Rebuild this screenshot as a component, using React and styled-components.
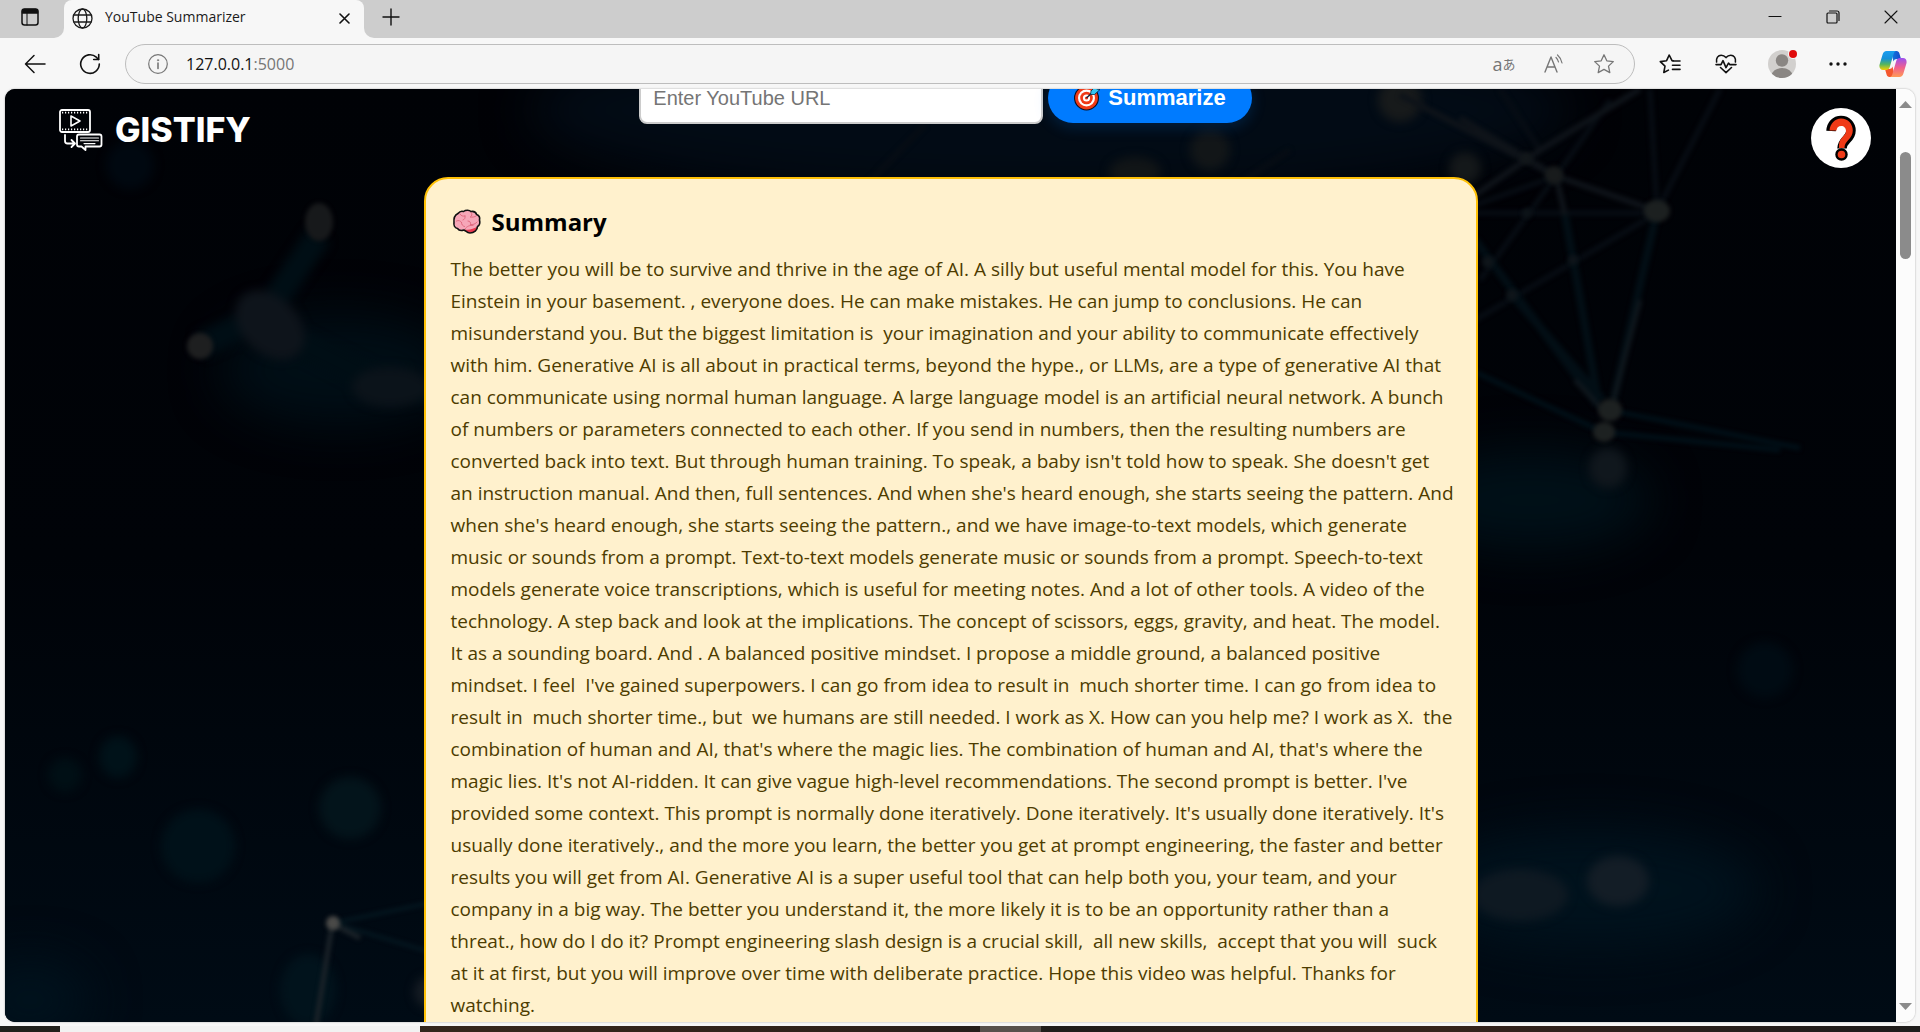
import React from "react";
import styled, { createGlobalStyle } from "styled-components";

const uiFont = `"Open Sans", "Noto Sans", "Noto Sans CJK JP", sans-serif`;

const GlobalStyle = createGlobalStyle`
  *, *::before, *::after { box-sizing: border-box; }
  body { margin: 0; background: #f7f7f7; font-family: ${uiFont}; }
  button, input { font: inherit; margin: 0; }
  svg { display: block; flex: none; }
`;

/* ---------- browser window ---------- */

const Window = styled.div`
  display: flex;
  flex-direction: column;
  height: 100vh;
  overflow: hidden;
  background: #f7f7f7;
`;

const TabStrip = styled.header`
  display: flex;
  height: 38px;
  flex: none;
`;

const StripStart = styled.div`
  display: flex;
  justify-content: center;
  width: 64px;
  padding-right: 4px;
  background: #cdcdcd;
  border-bottom-right-radius: 10px;
`;

const StripEnd = styled.div`
  display: flex;
  justify-content: space-between;
  flex: 1;
  background: #cdcdcd;
  border-bottom-left-radius: 10px;
`;

const TabSlot = styled.div`
  width: 300px;
  background: linear-gradient(#cdcdcd 8px, #f7f7f7 8px);
`;

const Tab = styled.div`
  display: flex;
  align-items: center;
  height: 36px;
  padding: 0 6px 0 8px;
  gap: 12px;
  background: #f7f7f7;
  border-radius: 8px 8px 0 0;
  font-size: 14px;
  line-height: 20px;
  color: #1b1b1b;
`;

const TabTitle = styled.span`
  flex: 1;
  margin-bottom: 2px;
`;

const IconButton = styled.button`
  display: flex;
  align-items: center;
  justify-content: center;
  flex: none;
  width: ${(p) => p.$w}px;
  height: ${(p) => p.$h || 36}px;
  padding: 0;
  border: 0;
  background: none;
  color: ${(p) => p.$color || "#111"};
`;

const WindowControls = styled.div`
  display: flex;
`;

const Toolbar = styled.nav`
  display: flex;
  align-items: center;
  height: 51px;
  flex: none;
  padding-left: 7px;
`;

const AddressBar = styled.div`
  display: flex;
  align-items: center;
  flex: 1;
  height: 40px;
  margin: 0 7px 0 8px;
  padding: 0 5px 0 22px;
  border: 1px solid #bdbdbd;
  border-radius: 20px;
  background: #f5f5f5;
  font-size: 16px;
  line-height: 24px;
`;

const Address = styled.div`
  flex: 1;
  padding-left: 18px;
  color: #111;
`;

const Port = styled.span`
  color: #767676;
`;

const LatinA = styled.span`
  font-size: 18px;
  line-height: 24px;
`;

const KanaA = styled.span`
  font-family: "Noto Sans CJK JP", sans-serif;
  font-size: 13px;
  line-height: 24px;
`;

const Frame = styled.div`
  display: flex;
  flex: 1;
  min-height: 0;
  margin: 0 5px 4px;
  border-radius: 10px;
  overflow: hidden;
  background: #fcfcfc;
  box-shadow: 0 0 2px rgba(0, 0, 0, 0.35);
`;

const ScrollTrack = styled.div`
  display: flex;
  flex-direction: column;
  align-items: center;
  width: 19px;
  padding: 12px 0;
  background: #fcfcfc;
  color: #8b8b8b;
`;

const ScrollThumb = styled.div`
  width: 11px;
  height: 107px;
  margin: 44px 0 auto;
  border-radius: 6px;
  background: #8b8b8b;
`;

const Taskbar = styled.footer`
  display: flex;
  flex: none;
  height: 6px;
  background: linear-gradient(90deg, #1f201c, #35261d 25%, #2e211a 45%, #1f1c1a 55%, #35231b 75%, #1e1c1b);
`;

const TaskbarItem = styled.div`
  width: ${(p) => p.$w}px;
  margin-left: ${(p) => p.$gap}px;
  background: ${(p) => p.$bg};
`;

/* ---------- page ---------- */

const Page = styled.main`
  position: relative;
  flex: 1;
  min-width: 0;
  overflow: hidden;
  background: #000307;
`;

const Backdrop = styled.svg`
  position: absolute;
  inset: 0;
  width: 100%;
  height: 100%;
`;

const FloatingBar = styled.div`
  position: absolute;
  inset: 0 0 auto;
  display: flex;
  justify-content: space-between;
  align-items: flex-start;
  padding: 19px 25px 0 54px;
`;

const Brand = styled.a`
  display: flex;
  align-items: center;
  gap: 12px;
  color: #fff;
  text-decoration: none;
  font-family: Inter, "Open Sans", sans-serif;
  font-size: 34px;
  font-weight: 800;
  line-height: 44px;
`;

const HelpButton = styled.button`
  display: flex;
  align-items: center;
  justify-content: center;
  width: 60px;
  height: 60px;
  padding: 0;
  border: 0;
  border-radius: 50%;
  background: #fff;
`;

const Content = styled.div`
  position: relative;
  display: flex;
  flex-direction: column;
  align-items: center;
  margin-top: -17px;
`;

const UrlForm = styled.form`
  display: flex;
  align-items: center;
  gap: 5px;
  padding-right: 10px;
  font-family: "Liberation Sans", Arial, sans-serif;
`;

const UrlInput = styled.input`
  width: 404px;
  height: 52px;
  padding: 0 12px;
  border: 2px solid #ccc;
  border-radius: 8px;
  background: #fff;
  font-size: 20px;
  &::placeholder { color: #757575; opacity: 1; }
`;

const SubmitButton = styled.button`
  display: flex;
  align-items: center;
  gap: 8px;
  height: 50px;
  padding: 0 26px;
  border: 0;
  border-radius: 25px;
  background: #007bff;
  box-shadow: 0 4px 15px rgba(0, 123, 255, 0.2);
  color: #fff;
  font-size: 22px;
  font-weight: 700;
`;

const Card = styled.section`
  width: 1054px;
  max-width: 100%;
  margin-top: 53px;
  padding: 25px;
  border: 2px solid #ffc107;
  border-radius: 24px;
  background: #fff1cd;
`;

const CardTitle = styled.h2`
  display: flex;
  align-items: center;
  gap: 9px;
  margin: 0 0 13px;
  color: #000;
  font-size: 24px;
  font-weight: 700;
  line-height: 36px;
`;

const CardText = styled.p`
  margin: 0;
  color: #4d3c00;
  font-size: 19px;
  line-height: 32px;
  white-space: pre;
`;

const summary = [
  "The better you will be to survive and thrive in the age of AI. A silly but useful mental model for this. You have",
  "Einstein in your basement. , everyone does. He can make mistakes. He can jump to conclusions. He can",
  "misunderstand you. But the biggest limitation is  your imagination and your ability to communicate effectively",
  "with him. Generative AI is all about in practical terms, beyond the hype., or LLMs, are a type of generative AI that",
  "can communicate using normal human language. A large language model is an artificial neural network. A bunch",
  "of numbers or parameters connected to each other. If you send in numbers, then the resulting numbers are",
  "converted back into text. But through human training. To speak, a baby isn't told how to speak. She doesn't get",
  "an instruction manual. And then, full sentences. And when she's heard enough, she starts seeing the pattern. And",
  "when she's heard enough, she starts seeing the pattern., and we have image-to-text models, which generate",
  "music or sounds from a prompt. Text-to-text models generate music or sounds from a prompt. Speech-to-text",
  "models generate voice transcriptions, which is useful for meeting notes. And a lot of other tools. A video of the",
  "technology. A step back and look at the implications. The concept of scissors, eggs, gravity, and heat. The model.",
  "It as a sounding board. And . A balanced positive mindset. I propose a middle ground, a balanced positive",
  "mindset. I feel  I've gained superpowers. I can go from idea to result in  much shorter time. I can go from idea to",
  "result in  much shorter time., but  we humans are still needed. I work as X. How can you help me? I work as X.  the",
  "combination of human and AI, that's where the magic lies. The combination of human and AI, that's where the",
  "magic lies. It's not AI-ridden. It can give vague high-level recommendations. The second prompt is better. I've",
  "provided some context. This prompt is normally done iteratively. Done iteratively. It's usually done iteratively. It's",
  "usually done iteratively., and the more you learn, the better you get at prompt engineering, the faster and better",
  "results you will get from AI. Generative AI is a super useful tool that can help both you, your team, and your",
  "company in a big way. The better you understand it, the more likely it is to be an opportunity rather than a",
  "threat., how do I do it? Prompt engineering slash design is a crucial skill,  all new skills,  accept that you will  suck",
  "at it at first, but you will improve over time with deliberate practice. Hope this video was helpful. Thanks for",
  "watching.",
].join("\n");

/* ---------- drawings ---------- */

const Stroke = ({ w, h = w, sw = 1.4, box, children }) => (
  <svg width={w} height={h} viewBox={box || `0 0 ${w} ${h}`} fill="none" stroke="currentColor" strokeWidth={sw} strokeLinecap="round" strokeLinejoin="round" aria-hidden="true">
    {children}
  </svg>
);

const TabActionsIcon = () => (
  <Stroke w={18} sw={1.5}>
    <rect x="1" y="1" width="16" height="16" rx="2.5" />
    <path d="M1.5 3.5a2 2 0 0 1 2-2h11a2 2 0 0 1 2 2V5h-15z" fill="currentColor" />
    <path d="M6 5.5V17" strokeWidth="1" />
  </Stroke>
);

const GlobeIcon = () => (
  <Stroke w={21} sw={1.3}>
    <circle cx="10.5" cy="10.5" r="9.5" />
    <ellipse cx="10.5" cy="10.5" rx="4.3" ry="9.5" />
    <path d="M2 7h17M2 14h17" />
  </Stroke>
);

const InfoIcon = () => (
  <Stroke w={20} sw={1.2}>
    <circle cx="10" cy="10" r="9.3" />
    <path d="M10 9v5.5" strokeWidth="1.6" />
    <circle cx="10" cy="6.2" r="0.7" fill="currentColor" strokeWidth="0.6" />
  </Stroke>
);

const ReloadIcon = () => (
  <Stroke w={22} sw={1.6}>
    <path d="M20.3 11a9.3 9.3 0 1 1-3-6.8l2.2 2.2" />
    <path d="M19.7 1.5v5h-5" />
  </Stroke>
);

const starPath = "M11 1.8l2.8 6 6.5.8-4.8 4.5 1.3 6.5L11 16.4l-5.8 3.2 1.3-6.5L1.7 8.6l6.5-.8z";

const FavouritesIcon = () => (
  <Stroke w={22} sw={1.6}>
    <path d="M14.2 7.8 13 7.7 10.2 2 7.6 7.7l-6.3.9L6 13.1l-1.2 6.4 4.6-2.4" />
    <path d="M14 8h7M13.5 12.2H21M13.5 16.4H21" />
  </Stroke>
);

const HealthIcon = () => (
  <Stroke w={22} sw={1.6}>
    <path d="M1.6 9C.8 5 3.2 2.2 6.2 2.2c2 0 3.5.9 4.8 2.4 1.300-1.500 2.800-2.400 4.800-2.400 3 0 5.400 2.800 4.600 6.800" />
    <path d="M1 11.600h5l2-4 3 7 2.500-4.500 1.200 1.500H21" />
    <path d="M5.500 14.500 11 19.600l5.500-5.100" />
  </Stroke>
);

const AvatarIcon = () => (
  <svg width="32" height="30" viewBox="0 0 32 30" aria-hidden="true">
    <defs><clipPath id="avatar"><circle cx="16" cy="15" r="14" /></clipPath></defs>
    <circle cx="16" cy="15" r="14" fill="#d2d0ce" />
    <g clipPath="url(#avatar)" fill="#8a8683">
      <circle cx="16" cy="11.500" r="6.200" />
      <ellipse cx="16" cy="27" rx="10.500" ry="8" />
    </g>
    <circle cx="27" cy="5" r="5" fill="#f7f7f7" />
    <circle cx="27" cy="5" r="4" fill="#e00b0b" />
  </svg>
);

const CopilotIcon = () => (
  <svg width="28" height="28" viewBox="0 0 28 28" aria-hidden="true">
    <defs>
      <linearGradient id="cpA" x1="0" y1="0" x2="0" y2="1">
        <stop offset="0" stopColor="#1a9df0" /><stop offset=".4" stopColor="#1590d8" /><stop offset=".7" stopColor="#55b560" /><stop offset="1" stopColor="#f7d000" />
      </linearGradient>
      <linearGradient id="cpB" x1="0" y1="0" x2="0" y2="1">
        <stop offset="0" stopColor="#9b50f0" /><stop offset=".5" stopColor="#f0608e" /><stop offset="1" stopColor="#ff9a55" />
      </linearGradient>
      <linearGradient id="cpC" x1="0" y1="0" x2="1" y2="0"><stop offset="0" stopColor="#127be0" /><stop offset="1" stopColor="#1747c8" /></linearGradient>
    </defs>
    <path d="M12 1h5.500c1.600 0 2.500 1 3 2.700L22 9h-4c-2 0-3 .8-3.500 2.500z" fill="url(#cpC)" />
    <path d="M16 27h-5.500c-1.600 0-2.500-1-3-2.700L6 19h4c2 0 3-.8 3.500-2.500z" fill="#f4572e" />
    <path d="M7.500 1H17c-1.500.5-2 1.500-2.500 3.200l-3.800 13C10.200 18.800 9 20 7 20H4C1.300 20-.2 17.500.6 14.500l3-10C4.200 2.300 5.500 1 7.500 1z" fill="url(#cpA)" />
    <path d="M20.500 27H11c1.500-.5 2-1.500 2.500-3.200l3.800-13C17.800 9.200 19 8 21 8h3c2.700 0 4.200 2.500 3.400 5.500l-3 10c-.6 2.200-1.900 3.500-3.900 3.500z" fill="url(#cpB)" />
  </svg>
);

const BrandIcon = () => (
  <Stroke w={44} sw={1.8}>
    <rect x="1" y="2" width="30" height="22" rx="2" />
    <path d="M3 4.600h26M3 21.400h26" strokeWidth="1.600" strokeDasharray="1.200 1.800" strokeLinecap="butt" />
    <path d="M12 8v10l9-5z" strokeWidth="1.600" />
    <path d="M6 27v6q0 2.500 2.500 2.500H15M12.500 32l3.500 3.500-3.500 3.500" />
    <path d="M20 26.500h20.500q2 0 2 2v8q0 2-2 2H26.500v3.500l-4-3.500H20q-2 0-2-2v-8q0-2 2-2z" />
    <path d="M21.500 30h18M21.500 32.800h18M25 35.600h11" strokeWidth="1.100" />
  </Stroke>
);

const QuestionMark = () => (
  <svg width="30" height="46" viewBox="0 0 30 46" fill="none" strokeLinejoin="round" aria-hidden="true">
    <g stroke="#000">
      <path d="M5 16C5.500 9.500 9.500 5.500 15 5.500c6 0 10 4.500 10 10 0 4-2 6.500-4.500 9s-4.500 5-4.500 9" strokeWidth="9.500" />
      <circle cx="15.500" cy="39.500" r="4" strokeWidth="4.500" />
    </g>
    <path d="M3.500 15.500C4 8.500 9 3.500 15 3.500c7 0 11.800 5.500 11.800 12 0 4-2 7-4.500 9.500-2.500 2.700-3.800 4.500-3.800 8h-5.500v-2.500c0-4 1.500-6.500 4-9 2-2 3-3.500 3-5.500 0-3-2-5-4.800-5s-4.700 2-4.700 4.500z" fill="#f03a17" />
    <circle cx="15.500" cy="39.500" r="3.800" fill="#f03a17" />
  </svg>
);

const TargetIcon = () => (
  <svg width="26" height="26" viewBox="0 0 26 26" aria-hidden="true">
    <circle cx="12.500" cy="13" r="12.500" fill="#0b1020" />
    <circle cx="12.500" cy="13" r="11.400" fill="#f03a17" />
    <circle cx="12.500" cy="13" r="8.500" fill="#fff" />
    <circle cx="12.500" cy="13" r="6.300" fill="#f03a17" />
    <circle cx="12.500" cy="13" r="3.600" fill="#fff" />
    <circle cx="12.500" cy="13" r="1.600" fill="#f03a17" />
    <path d="M12.500 13 20 6" stroke="#10243c" strokeWidth="1.400" />
    <path d="M16.500 9.500 17 6l5-5 .6 3L26 4.500l-5.500 5z" fill="#33c5f3" stroke="#10243c" strokeWidth=".8" />
  </svg>
);

const BrainIcon = () => (
  <svg width="32" height="26" viewBox="0 0 32 26" strokeLinecap="round" strokeLinejoin="round" aria-hidden="true">
    <path d="M7 4.500C8.500 2.500 11 2 12.500 2.500 15 .5 18.500 1 20 2.500c3-.5 5 1 5.600 3 2.500 1 3.400 3.500 2.900 5.500.8 3-.2 5.500-2 6.500C26.500 21 23 24 19 24c-3 0-4-2-6-3-3 1-5.500 0-6.500-1.500C3.500 19 2.500 16 3 13.500 2.500 9 4 6 7 4.500z" fill="#f6a6b8" />
    <path d="M27 17.500C26 21.500 22.500 23.500 19 23.500c-2.500 0-4-1.500-5-3 4 .8 8.500-.5 13-3z" fill="#e8384f" />
    <path d="M9 5c1 2 3 2.500 5 2M14 7c.5 2-.5 3.500-2 4M20 3.500c1.500 1.500 1 3.500-.5 4.500M19.500 8c2 .5 4 0 5.500-1M5.500 12c2-1 4-.5 5 1.500M10.500 13.500c0 2 1 3.500 3 4M17 12c2 0 3 1.500 2.500 3.500M19.500 15.500c2.500.5 5-.5 6.500-2.500M14 20c2-3 5-4 8-3.500" fill="none" stroke="#e06a80" strokeWidth="1" />
    <path d="M7 4.500C8.500 2.500 11 2 12.500 2.500 15 .5 18.500 1 20 2.500c3-.5 5 1 5.600 3 2.500 1 3.400 3.500 2.900 5.500.8 3-.2 5.500-2 6.500C26.500 21 23 24 19 24c-3 0-4-2-6-3-3 1-5.500 0-6.500-1.500C3.500 19 2.500 16 3 13.500 2.500 9 4 6 7 4.500z" fill="none" stroke="#111" strokeWidth="1.600" />
  </svg>
);

const Blur = ({ id, by }) => (
  <filter id={id} x="-100%" y="-100%" width="300%" height="300%" colorInterpolationFilters="sRGB">
    <feGaussianBlur stdDeviation={by} />
  </filter>
);

const Network = () => (
  <Backdrop viewBox="5 89 1891 933" preserveAspectRatio="xMidYMid slice" aria-hidden="true">
    <defs>
      <linearGradient id="deep" x1="0" y1="0" x2="0" y2="1">
        <stop offset="0" stopColor="#000206" /><stop offset=".5" stopColor="#000308" /><stop offset="1" stopColor="#000b15" />
      </linearGradient>
      <Blur id="soft" by={2} />
      <Blur id="mid" by={5} />
      <Blur id="wide" by={24} />
    </defs>
    <rect x="5" y="89" width="1891" height="933" fill="url(#deep)" />
    <g filter="url(#wide)">
      <ellipse cx="1050" cy="110" rx="520" ry="90" fill="#020b15" />
      <ellipse cx="340" cy="370" rx="120" ry="55" fill="#000e16" />
      <ellipse cx="1530" cy="500" rx="120" ry="50" fill="#001018" />
      <ellipse cx="1590" cy="890" rx="170" ry="60" fill="#00121d" />
      <ellipse cx="30" cy="1000" rx="60" ry="40" fill="#00121d" />
    </g>
    <g filter="url(#mid)">
      <path d="M319 235 265 315 200 346M265 325 390 388 430 392" stroke="#000e15" strokeWidth="26" fill="none" />
      <ellipse cx="270" cy="325" rx="40" ry="28" transform="rotate(45 270 325)" fill="#0e141b" />
      <ellipse cx="390" cy="387" rx="38" ry="20" fill="#0b131a" />
      <ellipse cx="118" cy="757" rx="19" ry="21" fill="#001219" />
      <circle cx="65" cy="775" r="17" fill="#000f15" />
      <circle cx="198" cy="846" r="37" fill="#001119" />
      <circle cx="350" cy="808" r="31" fill="#03141b" />
      <ellipse cx="308" cy="990" rx="28" ry="36" fill="#01131c" />
      <circle cx="430" cy="992" r="16" fill="#151c23" />
      <circle cx="130" cy="165" r="24" fill="#000810" />
      <circle cx="1210" cy="150" r="20" fill="#121618" />
      <ellipse cx="1135" cy="172" rx="26" ry="15" fill="#111517" />
      <circle cx="1400" cy="100" r="22" fill="#171a1b" />
      <circle cx="1465" cy="168" r="16" fill="#14181a" />
      <ellipse cx="1608" cy="468" rx="19" ry="20" fill="#10171d" />
      <circle cx="1765" cy="670" r="28" fill="#000b13" />
      <ellipse cx="1618" cy="881" rx="31" ry="25" fill="#131d26" />
      <ellipse cx="1520" cy="895" rx="48" ry="26" fill="#0e1922" />
    </g>
    <g filter="url(#soft)" fill="none" strokeWidth="5">
      <path d="M1556 176 1475 205M1475 213H1657M1657 213 1475 320M1556 176 1480 280M1540 150 1500 89M1657 211 1650 89M1657 211 1720 89M1556 176 1610 100M925 125 868 183M1290 150 1240 183" stroke="#070d14" />
      <path d="M1556 176 1657 211M1540 150 1640 89M1556 176 1460 118M1475 195 1540 150M1556 176 1565 215M1556 176 1400 95" stroke="#0e1319" strokeWidth="6" />
      <path d="M1565 215 1575 270 1598 400M1657 211 1613 402M1475 240 1598 405M1512 295 1603 400" stroke="#020e15" strokeWidth="8" />
      <path d="M1475 372 1603 432M1609 410 1800 448M1603 432 1780 450" stroke="#001018" strokeWidth="5" />
      <path d="M1640 300 1613 402M1575 380 1603 410" stroke="#0e161c" strokeWidth="5" />
      <path d="M333 923 430 903M333 923 430 952" stroke="#04161f" strokeWidth="4" />
      <path d="M332 925 316 1025M335 925 360 938" stroke="#1a2228" strokeWidth="5" />
    </g>
    <g filter="url(#soft)">
      <ellipse cx="319" cy="222" rx="14" ry="19" fill="#17191b" />
      <circle cx="200" cy="346" r="13" fill="#1e1f20" />
      <circle cx="333" cy="923" r="7" fill="#4a4a48" />
      <circle cx="1554" cy="175" r="9" fill="#181b1c" />
      <circle cx="1526" cy="158" r="6" fill="#12171a" />
      <ellipse cx="1657" cy="211" rx="13" ry="11" fill="#1c2020" />
      <ellipse cx="1610" cy="410" rx="12" ry="11" fill="#1d2121" />
      <ellipse cx="1604" cy="432" rx="11" ry="10" fill="#1d2121" />
      <circle cx="1488" cy="262" r="6" fill="#0f151a" />
      <circle cx="1512" cy="295" r="6" fill="#0f151a" />
      <circle cx="1573" cy="260" r="5" fill="#0f151a" />
      <circle cx="1527" cy="213" r="5" fill="#0d1318" />
    </g>
  </Backdrop>
);

/* ---------- app ---------- */

export default function App() {
  return (
    <Window>
      <GlobalStyle />
      <TabStrip>
        <StripStart>
          <IconButton $w={40} $h={34} aria-label="Tab actions"><TabActionsIcon /></IconButton>
        </StripStart>
        <TabSlot>
          <Tab>
            <GlobeIcon />
            <TabTitle>YouTube Summarizer</TabTitle>
            <IconButton $w={28} $h={28} aria-label="Close tab">
              <Stroke w={11} sw={1.6}><path d="M1 1l9 9M10 1l-9 9" /></Stroke>
            </IconButton>
          </Tab>
        </TabSlot>
        <StripEnd>
          <IconButton $w={54} $h={33} aria-label="New tab">
            <Stroke w={18} sw={1.4}><path d="M9 1v16M1 9h16" /></Stroke>
          </IconButton>
          <WindowControls>
            <IconButton $w={58} $h={34} aria-label="Minimize">
              <Stroke w={14} sw={1.2}><path d="M1 6.500h12" /></Stroke>
            </IconButton>
            <IconButton $w={58} $h={34} aria-label="Restore">
              <Stroke w={14} sw={1.2}><rect x="1" y="3" width="10" height="10" rx="1" /><path d="M3.500 1H11q2 0 2 2v7.500" /></Stroke>
            </IconButton>
            <IconButton $w={58} $h={34} aria-label="Close">
              <Stroke w={14} sw={1.1}><path d="M1 1l12 12M13 1 1 13" /></Stroke>
            </IconButton>
          </WindowControls>
        </StripEnd>
      </TabStrip>

      <Toolbar>
        <IconButton $w={55} aria-label="Back">
          <Stroke w={22} sw={1.500}><path d="M21 11H1.500M10 2.500 1.500 11l8.500 8.500" /></Stroke>
        </IconButton>
        <IconButton $w={55} aria-label="Refresh"><ReloadIcon /></IconButton>
        <AddressBar>
          <IconButton $w={20} $color="#767676" aria-label="Site information"><InfoIcon /></IconButton>
          <Address>127.0.0.1<Port>:5000</Port></Address>
          <IconButton $w={50} $color="#767676" aria-label="Translate"><LatinA>a</LatinA><KanaA>あ</KanaA></IconButton>
          <IconButton $w={50} $color="#767676" aria-label="Read aloud">
            <Stroke w={20} h={20}><path d="M1 18 7 3l6 15M3 13h8" /><path d="M12 3.500q2 2 2.500 4.500M13.500 1q3.500 3 4.500 8" strokeWidth="1.200" /></Stroke>
          </IconButton>
          <IconButton $w={50} $color="#767676" aria-label="Add to favourites">
            <Stroke w={22} sw={1.300}><path d={starPath} /></Stroke>
          </IconButton>
        </AddressBar>
        <IconButton $w={56} aria-label="Favourites"><FavouritesIcon /></IconButton>
        <IconButton $w={56} aria-label="Browser essentials"><HealthIcon /></IconButton>
        <IconButton $w={56} aria-label="Profile"><AvatarIcon /></IconButton>
        <IconButton $w={56} aria-label="Settings and more">
          <svg width="18" height="4" viewBox="0 0 18 4" fill="currentColor" aria-hidden="true"><circle cx="2" cy="2" r="1.700" /><circle cx="9" cy="2" r="1.700" /><circle cx="16" cy="2" r="1.700" /></svg>
        </IconButton>
        <IconButton $w={54} aria-label="Copilot"><CopilotIcon /></IconButton>
      </Toolbar>

      <Frame>
        <Page>
          <Network />
          <Content>
            <UrlForm onSubmit={(e) => e.preventDefault()}>
              <UrlInput type="text" aria-label="Enter YouTube URL" placeholder="Enter YouTube URL" />
              <SubmitButton type="submit"><TargetIcon />Summarize</SubmitButton>
            </UrlForm>
            <Card>
              <CardTitle><BrainIcon />Summary</CardTitle>
              <CardText>{summary}</CardText>
            </Card>
          </Content>
          <FloatingBar>
            <Brand href="#"><BrandIcon />GISTIFY</Brand>
            <HelpButton aria-label="Help"><QuestionMark /></HelpButton>
          </FloatingBar>
        </Page>
        <ScrollTrack>
          <svg width="13" height="7" viewBox="0 0 13 7" fill="currentColor" aria-hidden="true"><path d="M0 7 6.500 0 13 7z" /></svg>
          <ScrollThumb />
          <svg width="13" height="7" viewBox="0 0 13 7" fill="currentColor" aria-hidden="true"><path d="M0 0h13L6.500 7z" /></svg>
        </ScrollTrack>
      </Frame>
      <Taskbar>
        <TaskbarItem $gap={60} $w={360} $bg="#f2f2f2" />
        <TaskbarItem $gap={560} $w={61} $bg="#57504c" />
      </Taskbar>
    </Window>
  );
}
